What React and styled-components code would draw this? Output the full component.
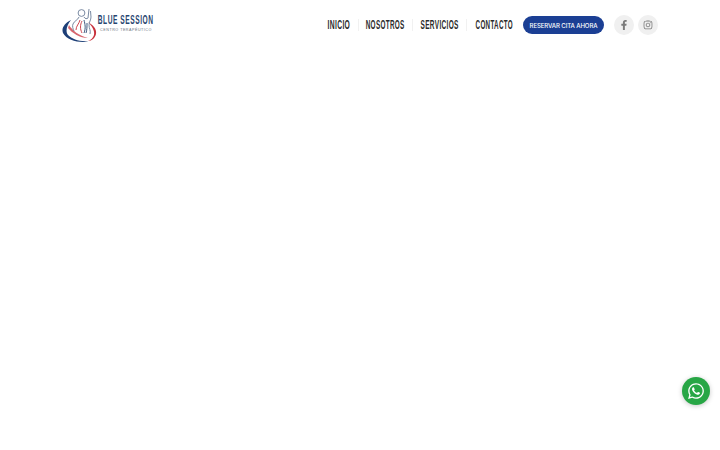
import React from "react";
import styled, { createGlobalStyle } from "styled-components";
import { FaFacebookF, FaInstagram, FaWhatsapp } from "react-icons/fa";

const GlobalStyle = createGlobalStyle`
  * {
    box-sizing: border-box;
  }
  html, body {
    margin: 0;
    background: #fff;
    font-family: "Liberation Sans", Arial, sans-serif;
  }
  a {
    text-decoration: none;
    color: inherit;
  }
`;

const Page = styled.div`
  position: relative;
  height: 450px;
  overflow: hidden;
`;
const Header = styled.header`
  display: flex;
  align-items: center;
  justify-content: space-between;
  height: 50px;
  padding: 0 62px;
`;
const Logo = styled.a`
  display: flex;
  align-items: center;
  gap: 0;
`;
const LogoText = styled.div`
  display: flex;
  flex-direction: column;
  align-items: center;
  width: 58px;
  margin-top: -2px;
`;
const LogoName = styled.span`
  display: block;
  font-weight: 700;
  font-size: 12px;
  line-height: 11px;
  letter-spacing: 1px;
  color: #27456f;
  white-space: nowrap;
  transform: scaleX(0.55);
`;
const LogoSub = styled.span`
  font-size: 3.7px;
  line-height: 5px;
  letter-spacing: 0.5px;
  color: #6c7480;
  white-space: nowrap;
  margin-top: 2px;
`;
const Right = styled.div`
  display: flex;
  align-items: center;
`;
const Nav = styled.nav`
  display: flex;
  align-items: center;
`;
const NavLink = styled.a`
  display: flex;
  justify-content: center;
  width: ${(p) => p.$width}px;
  line-height: 12px;
  border-left: 1px solid ${(p) => (p.$first ? "transparent" : "#f1f1f1")};
`;
const NavLabel = styled.span`
  display: block;
  font-weight: 700;
  font-size: 12.5px;
  letter-spacing: 0.6px;
  color: #2b2b2b;
  white-space: nowrap;
  transform: scaleX(${(p) => p.$scale});
`;
const CtaButton = styled.a`
  display: flex;
  align-items: center;
  justify-content: center;
  width: 81px;
  height: 18px;
  margin-left: 1px;
  border-radius: 9px;
  background: #1b3f94;
  color: #fff;
  font-family: Inter, "Liberation Sans", sans-serif;
  font-weight: 500;
  font-size: 6.1px;
  letter-spacing: -0.12px;
  white-space: nowrap;
`;
const Socials = styled.div`
  display: flex;
  gap: 4px;
  margin-left: 10px;
`;
const SocialIcon = styled.a`
  display: flex;
  align-items: center;
  justify-content: center;
  width: 20px;
  height: 20px;
  border-radius: 50%;
  background: #f0f0f0;
  color: #7b7b7b;
  font-size: 10px;
`;
const WhatsappButton = styled.a`
  position: absolute;
  left: 682px;
  top: 377px;
  display: flex;
  align-items: center;
  justify-content: center;
  width: 28px;
  height: 28px;
  border-radius: 50%;
  background: #27a645;
  color: #fff;
  font-size: 18px;
  box-shadow: 0 1px 5px rgba(0, 0, 0, 0.22);
`;

function LogoMark() {
  return (
    <svg width="35" height="35" viewBox="0 0 35 35" fill="none">
      {/* ring */}
      <path d="M9 12C3 15 -1 20 1 25c3 6 12 9 20 9 2 0 4-.4 5-1-8 1-16-2-20-6-3-4-1-10 3-15z" fill="#1d3f77" />
      <path d="M26 14c5 3 9 7 8 12-1 4-4 7-8 7 3-1 5-3 6-6 1-4-2-9-6-13z" fill="#c8323c" />
      <path d="M7 17c3 5 10 11 19 13-8 0-16-5-20-10z" fill="#c8323c" opacity="0.75" />
      {/* body */}
      <circle cx="19.5" cy="5" r="3.4" stroke="#6b7d97" strokeWidth="0.9" />
      <path d="M17 9c-1 3-5 4-6 7-1 2 0 5 1 7M22 9c1 2 3 2 4 1l1-9M28.5 3l.5 6c0 3-2 5-2 8 0 4 2 5 1 9" stroke="#6b7d97" strokeWidth="0.9" />
      {/* veins */}
      <path d="M18 12c-1 4-4 6-4 10M20 13c-2 4-2 8 0 12" stroke="#c8323c" strokeWidth="0.9" />
      <path d="M22 12c1 4 2 8 0 13M25 15c0 4 0 7-1 10" stroke="#27456f" strokeWidth="0.9" />
    </svg>
  );
}

const links = [
  { label: "INICIO", width: 40, scale: 0.54 },
  { label: "NOSOTROS", width: 54, scale: 0.51 },
  { label: "SERVICIOS", width: 54, scale: 0.52 },
  { label: "CONTACTO", width: 56, scale: 0.5 },
];

export default function App() {
  return (
    <Page>
      <GlobalStyle />
      <Header>
        <Logo href="#">
          <LogoMark />
          <LogoText>
            <LogoName>BLUE SESSION</LogoName>
            <LogoSub>CENTRO TERAPÉUTICO</LogoSub>
          </LogoText>
        </Logo>
        <Right>
          <Nav>
            {links.map((link, i) => (
              <NavLink key={link.label} href="#" $first={i === 0} $width={link.width}>
                <NavLabel $scale={link.scale}>{link.label}</NavLabel>
              </NavLink>
            ))}
          </Nav>
          <CtaButton href="#">RESERVAR CITA AHORA</CtaButton>
          <Socials>
            <SocialIcon href="#"><FaFacebookF /></SocialIcon>
            <SocialIcon href="#"><FaInstagram /></SocialIcon>
          </Socials>
        </Right>
      </Header>
      <WhatsappButton href="#"><FaWhatsapp /></WhatsappButton>
    </Page>
  );
}
